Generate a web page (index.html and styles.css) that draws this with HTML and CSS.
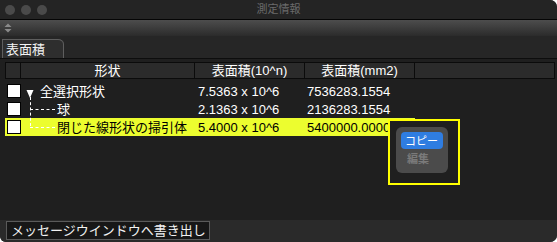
FILE: index.html
```html
<!DOCTYPE html>
<html lang="ja">
<head>
  <meta charset="UTF-8">
  <title>測定情報</title>
  <link rel="stylesheet" href="styles.css">
</head>
<body>
  <div class="window">
    <div class="titlebar">
      <div class="lights"><i></i><i></i><i></i></div>
      <span class="title">測定情報</span>
    </div>
    <div class="toolbar">
      <svg width="8" height="10" viewBox="0 0 8 10"><path d="M4 0.5L7.5 4H0.5Z M4 9.5L7.5 6H0.5Z" fill="#8a8a8a"/></svg>
    </div>
    <div class="tabbar">
      <div class="tab">表面積</div>
    </div>
    <div class="content">
      <div class="grid">
        <div class="row head">
          <div class="c c1"></div>
          <div class="c c2">形状</div>
          <div class="c c3">表面積(10^n)</div>
          <div class="c c4">表面積(mm2)</div>
          <div class="c c5"></div>
        </div>
        <div class="row">
          <div class="c c1"><span class="box"></span></div>
          <div class="c c2 tree"><svg class="tri" width="8" height="10" viewBox="0 0 8 10"><path d="M0.5 1H7.5L4 9Z" fill="#fff"/></svg>全選択形状</div>
          <div class="c c3">7.5363 x 10^6</div>
          <div class="c c4">7536283.1554</div>
        </div>
        <div class="row">
          <div class="c c1"><span class="box"></span></div>
          <div class="c c2 tree leaf">球</div>
          <div class="c c3">2.1363 x 10^6</div>
          <div class="c c4">2136283.1554</div>
        </div>
        <div class="row sel">
          <div class="c c1"><span class="box"></span></div>
          <div class="c c2 tree leaf">閉じた線形状の掃引体</div>
          <div class="c c3">5.4000 x 10^6</div>
          <div class="c c4">5400000.0000</div>
        </div>
        <span class="vline"></span>
      </div>
      <div class="popup">
        <div class="menu">
          <div class="item on">コピー</div>
          <div class="item off">編集</div>
        </div>
      </div>
    </div>
    <div class="bottombar">
      <button class="export">メッセージウインドウへ書き出し</button>
    </div>
  </div>
</body>
</html>
```
FILE: styles.css
```css
html, body {
  margin: 0;
  padding: 0;
  background: #fff;
}
body {
  font: 13px/1 "Liberation Sans", "Noto Sans CJK JP", sans-serif;
  color: #fff;
}
.window {
  position: relative;
  width: 557px;
  height: 242px;
  background: #2a2a2a;
  border-radius: 0 7px 7px 6px;
  overflow: hidden;
  display: flex;
  flex-direction: column;
}
.titlebar {
  height: 19px;
  background: #242424;
  border-bottom: 1px solid #050505;
  display: flex;
  align-items: center;
  position: relative;
}
.lights {
  display: flex;
  gap: 6px;
  padding-left: 5px;
}
.lights i {
  width: 10px;
  height: 10px;
  border-radius: 50%;
  background: #4a4a4a;
}
.title {
  position: absolute;
  left: 0;
  right: 0;
  text-align: center;
  font-size: 11px;
  color: #6b6b6b;
}
.toolbar {
  height: 16px;
  background: linear-gradient(#4d4d4d, #3c3c3c 50%, #2b2b2b);
  display: flex;
  align-items: center;
  padding-left: 4px;
}
.tabbar {
  height: 22px;
  background: #262626;
  border-bottom: 1px solid #0d0d0d;
  display: flex;
  align-items: flex-end;
  padding-left: 2px;
}
.tab {
  width: 57px;
  height: 18px;
  padding-left: 3px;
  background: #2e2e2e;
  border: 1px solid #5e5e5e;
  border-bottom: none;
  border-top-right-radius: 6px 5px;
  font-size: 13px;
  line-height: 19px;
  color: #f4f4f4;
}
.content {
  flex: 1;
  position: relative;
  background: #1f1f1f;
  padding: 3px 0 0 5px;
}
.grid {
  position: relative;
}
.row {
  display: flex;
  height: 18px;
  align-items: center;
}
.row.head {
  height: 15px;
  margin-bottom: 3px;
  border: 1px solid #0b0b0b;
  background: #2b2b2b;
  width: 548px;
}
.head .c {
  height: 100%;
  border-right: 1px solid #0b0b0b;
  text-align: center;
  line-height: 15px;
  padding: 0;
}
.head .c5 {
  border-right: none;
}
.c {
  box-sizing: border-box;
  white-space: nowrap;
  overflow: hidden;
}
.c1 { width: 16px; }
.c2 { width: 174px; }
.c3 { width: 110px; padding-left: 3px; }
.c4 { width: 110px; padding-left: 2px; }
.c5 { flex: 1; }
.head .c1 { width: 15px; }
.box {
  display: block;
  width: 12px;
  height: 12px;
  margin-left: 2px;
  background: #fff;
  border: 1px solid #000;
}
.tree {
  position: relative;
  padding-left: 19px;
}
.tri {
  position: absolute;
  left: 5px;
  top: 4px;
}
.leaf {
  padding-left: 36px;
}
.leaf::before {
  content: "";
  position: absolute;
  left: 9px;
  top: 50%;
  width: 25px;
  border-top: 1px dashed #fff;
}
.sel {
  background: #ecfd2f;
  color: #000;
  width: 410px;
}
.vline {
  position: absolute;
  left: 25px;
  top: 35px;
  height: 29px;
  border-left: 1px dashed #fff;
}
.popup {
  position: absolute;
  left: 388px;
  top: 60px;
  width: 54px;
  height: 48px;
  padding: 6px 8px 8px 6px;
  border: 2px solid #ffff00;
  background: #1f1f1f;
}
.menu {
  width: 52px;
  height: 46px;
  background: #4b4b4b;
  border-radius: 6px;
  padding: 5px;
  box-sizing: border-box;
}
.item {
  height: 17px;
  line-height: 17px;
  font-size: 11px;
  padding-left: 4px;
  border-radius: 4px;
  font-family: "Noto Sans CJK JP", sans-serif;
}
.item.on {
  background: #2f7de1;
  color: #fff;
}
.item.off {
  color: #7a7a7a;
  margin-top: 1px;
  padding-left: 6px;
  font-weight: bold;
}
.bottombar {
  height: 22px;
  background: #2a2a2a;
  padding: 1px 0 0 6px;
  box-sizing: border-box;
}
.export {
  display: block;
  height: 19px;
  width: 204px;
  margin: 0;
  padding: 0 0 0 4px;
  background: #171717;
  border: 1px solid #5a5a5a;
  color: #f2f2f2;
  font: 13px/17px "Liberation Sans", "Noto Sans CJK JP", sans-serif;
  text-align: left;
}
```
